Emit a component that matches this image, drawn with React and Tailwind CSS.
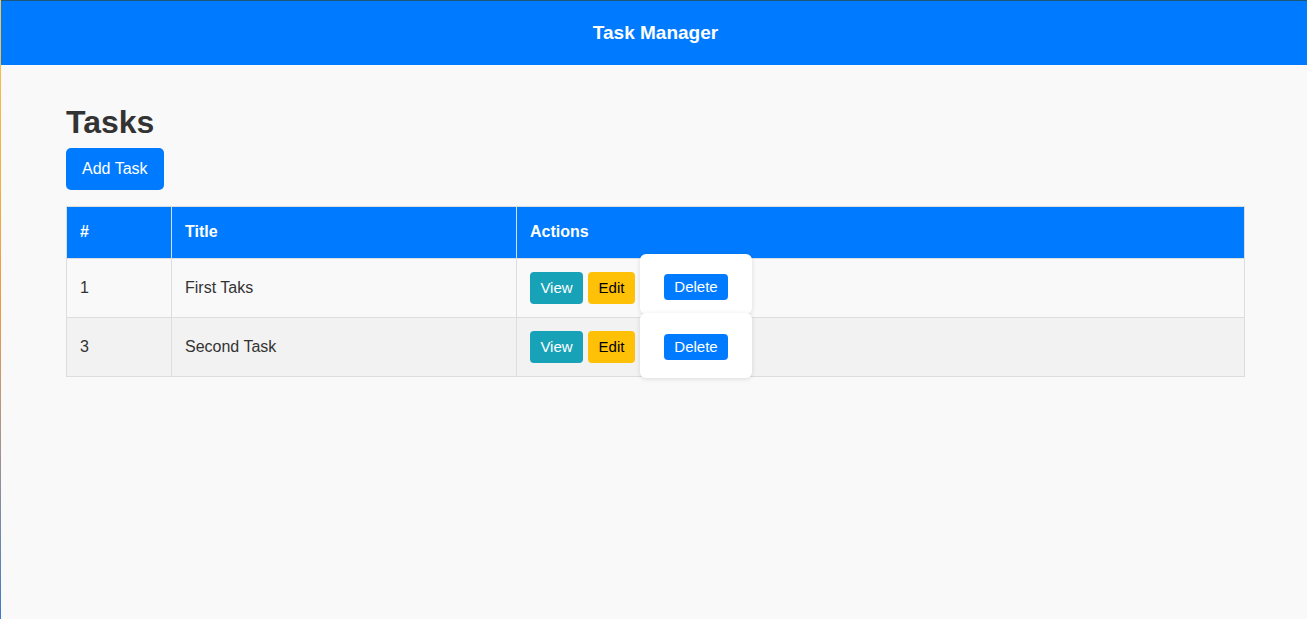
const tasks = [
  { id: 1, title: "First Taks" },
  { id: 3, title: "Second Task" },
];

export default function App() {
  return (
    <div className="flex min-h-[619px] bg-[#f9f9f9] font-['Liberation_Sans',Arial,sans-serif] text-[#333]">
      <div className="w-px shrink-0 bg-gradient-to-b from-[#f7c948] via-[#ef9a3c] to-[#3a78c9]" />
      <div className="flex-1">
        <header className="h-[65px] bg-[#007bff] border-t border-[#1d5878] flex items-center justify-center">
          <h1 className="text-[19px] font-bold text-white">Task Manager</h1>
        </header>

        <main className="px-[65px] pt-[39px]">
          <h2 className="text-[32px] font-bold leading-[36px] mb-[8px]">Tasks</h2>
          <button className="h-[42px] px-4 rounded-[5px] bg-[#007bff] text-white text-[16px]">
            Add Task
          </button>

          <table className="mt-4 w-[1179px] border-collapse text-[16px]">
            <thead>
              <tr className="bg-[#007bff] text-white h-[52px]">
                <th className="w-[105px] border border-[#ddd] px-[13px] pb-px text-left font-bold">#</th>
                <th className="w-[345px] border border-[#ddd] px-[13px] pb-px text-left font-bold">Title</th>
                <th className="border border-[#ddd] px-[13px] pb-px text-left font-bold">Actions</th>
              </tr>
            </thead>
            <tbody>
              {tasks.map((task, i) => (
                <tr key={task.id} className={i % 2 === 0 ? "h-[59px] bg-[#f9f9f9]" : "h-[59px] bg-[#f2f2f2]"}>
                  <td className="border border-[#ddd] px-[13px]">{task.id}</td>
                  <td className="border border-[#ddd] px-[13px]">{task.title}</td>
                  <td className="relative border border-[#ddd] px-[13px]">
                    <div className="flex items-center gap-[5px]">
                      <button className="h-8 w-[53px] rounded-[4px] bg-[#17a2b8] text-white text-[15px]">View</button>
                      <button className="h-8 w-[47px] rounded-[4px] bg-[#ffc107] text-black text-[15px]">Edit</button>
                    </div>
                    <div
                      className={
                        i === 0
                          ? "absolute left-[123px] top-[-5px] h-[60px] w-[112px] rounded-[6px] bg-white shadow-[0_1px_5px_rgba(0,0,0,0.12)] flex justify-center pt-[20px] z-10"
                          : "absolute left-[123px] top-[-5px] h-[65px] w-[112px] rounded-[6px] bg-white shadow-[0_1px_5px_rgba(0,0,0,0.12)] flex justify-center pt-[21px] z-10"
                      }
                    >
                      <button className="h-[26px] w-16 rounded-[4px] bg-[#007bff] text-white text-[15px]">Delete</button>
                    </div>
                  </td>
                </tr>
              ))}
            </tbody>
          </table>
        </main>
      </div>
    </div>
  );
}
